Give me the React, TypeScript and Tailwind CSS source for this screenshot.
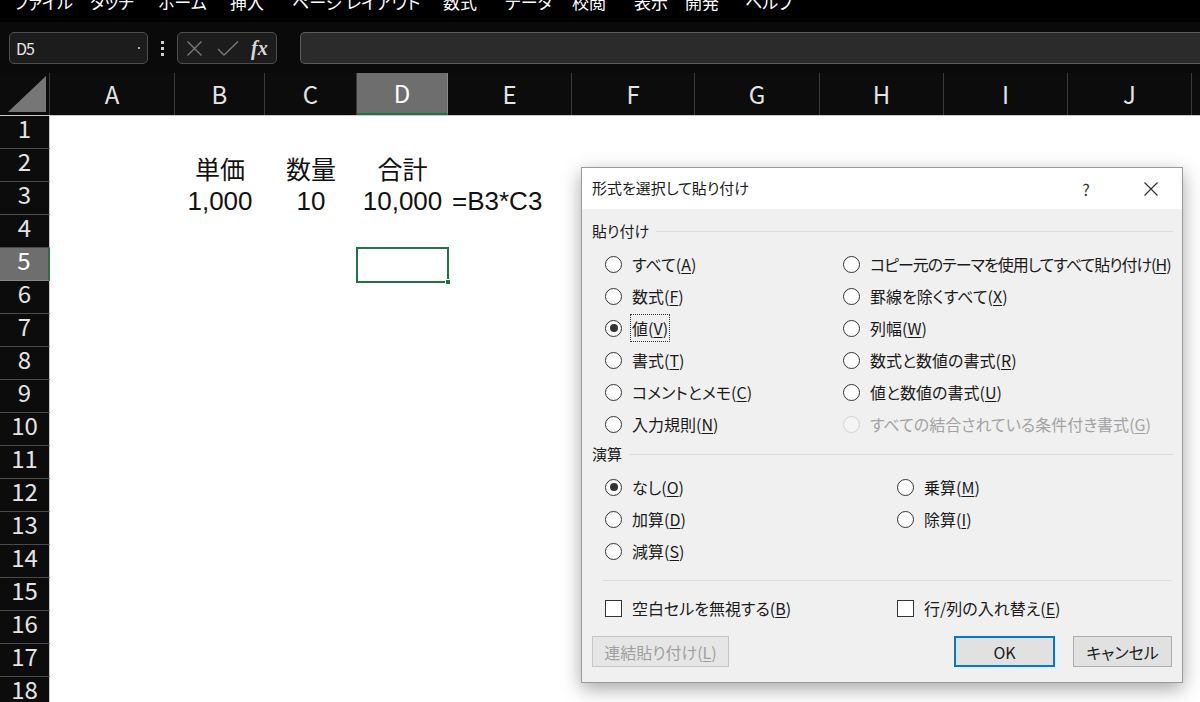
import React from "react";

const jp = "font-['Noto_Sans_CJK_JP','Noto_Sans',sans-serif] [font-feature-settings:'palt']";

const menus = [
  { t: "ファイル", w: "w-[76px]" },
  { t: "タッチ", w: "w-[68px]" },
  { t: "ホーム", w: "w-[72px]" },
  { t: "挿入", w: "w-[62px]" },
  { t: "ページ レイアウト", w: "w-[151px]" },
  { t: "数式", w: "w-[62px]" },
  { t: "データ", w: "w-[67px]" },
  { t: "校閲", w: "w-[62px]" },
  { t: "表示", w: "w-[51px]" },
  { t: "開発", w: "w-[60px]" },
  { t: "ヘルプ", w: "w-[60px]" },
];

const cols = [
  { k: "A", w: "w-[125px]" },
  { k: "B", w: "w-[90px]" },
  { k: "C", w: "w-[92px]" },
  { k: "D", w: "w-[91px]" },
  { k: "E", w: "w-[124px]" },
  { k: "F", w: "w-[123px]" },
  { k: "G", w: "w-[125px]" },
  { k: "H", w: "w-[124px]" },
  { k: "I", w: "w-[124px]" },
  { k: "J", w: "w-[124px]" },
  { k: "", w: "w-[60px]" },
];

// cell contents by row number
const cells: Record<number, Record<string, { t: string; jp?: boolean; left?: boolean }>> = {
  2: { B: { t: "単価", jp: true }, C: { t: "数量", jp: true }, D: { t: "合計", jp: true } },
  3: { B: { t: "1,000" }, C: { t: "10" }, D: { t: "10,000" }, E: { t: "=B3*C3", left: true } },
};

function Radio({ checked, disabled }: { checked?: boolean; disabled?: boolean }) {
  return (
    <span
      className={`w-[17px] h-[17px] shrink-0 rounded-full border flex items-center justify-center ${
        disabled ? "border-[#d2d2d2] bg-[#f4f4f4]" : "border-[#333] bg-white"
      }`}
    >
      {checked && <span className="w-[8px] h-[8px] rounded-full bg-[#333]" />}
    </span>
  );
}

function Label({ text, k, disabled }: { text: string; k: string; disabled?: boolean }) {
  return (
    <span className={`whitespace-nowrap ${disabled ? "text-[#a3a3a3]" : "text-[#1a1a1a]"}`}>
      {text}(<span className="underline underline-offset-2">{k}</span>)
    </span>
  );
}

function Option({ text, k, checked, disabled, focus, tight }: { text: string; k: string; checked?: boolean; disabled?: boolean; focus?: boolean; tight?: boolean }) {
  return (
    <div className={`h-[32px] flex items-center gap-[10px] ${tight ? "tracking-[-1px]" : ""}`}>
      <Radio checked={checked} disabled={disabled} />
      <span className={focus ? "outline outline-1 outline-dotted outline-[#333] outline-offset-[1px]" : ""}>
        <Label text={text} k={k} disabled={disabled} />
      </span>
    </div>
  );
}

function Section({ title }: { title: string }) {
  return (
    <div className="h-[20px] flex items-center gap-[7px] text-[15px] text-[#1a1a1a]">
      <span>{title}</span>
      <div className="flex-1 h-px bg-[#dcdcdc] mr-[-1px]" />
    </div>
  );
}

function PasteDialog() {
  return (
    <div className={`absolute left-[581px] top-[167px] w-[602px] border border-[#9a9a9a] bg-[#f0f0f0] shadow-[0_6px_18px_rgba(0,0,0,0.35)] ${jp}`}>
      <div className="h-[41px] bg-white flex items-center pl-[10px] text-[15px] text-[#1a1a1a]">
        <span className="flex-1">形式を選択して貼り付け</span>
        <span className="w-[20px] text-center text-[16px] text-[#333] mr-[47px]">?</span>
        <svg width="16" height="16" viewBox="0 0 16 16" className="mr-[23px]">
          <path d="M1.5 1.5 L14.5 14.5 M14.5 1.5 L1.5 14.5" stroke="#333" strokeWidth="1.2" />
        </svg>
      </div>
      <div className="px-[10px] pb-[15px] text-[16px]">
        <div className="mt-[12px]">
          <Section title="貼り付け" />
        </div>
        <div className="mt-[7px] pl-[13px] flex">
          <div className="w-[238px]">
            <Option text="すべて" k="A" />
            <Option text="数式" k="F" />
            <Option text="値" k="V" checked focus />
            <Option text="書式" k="T" />
            <Option text="コメントとメモ" k="C" />
            <Option text="入力規則" k="N" />
          </div>
          <div className="flex-1">
            <Option text="コピー元のテーマを使用してすべて貼り付け" k="H" tight />
            <Option text="罫線を除くすべて" k="X" />
            <Option text="列幅" k="W" />
            <Option text="数式と数値の書式" k="R" />
            <Option text="値と数値の書式" k="U" />
            <Option text="すべての結合されている条件付き書式" k="G" disabled />
          </div>
        </div>
        <div className="mt-[4px]">
          <Section title="演算" />
        </div>
        <div className="mt-[7px] pl-[13px] flex">
          <div className="w-[292px]">
            <Option text="なし" k="O" checked />
            <Option text="加算" k="D" />
            <Option text="減算" k="S" />
          </div>
          <div className="flex-1">
            <Option text="乗算" k="M" />
            <Option text="除算" k="I" />
          </div>
        </div>
        <div className="mt-[13px] ml-[11px] h-px bg-[#dcdcdc]" />
        <div className="mt-[17px] pl-[13px] flex h-[20px] items-center">
          <div className="w-[292px] flex items-center gap-[10px]">
            <span className="w-[17px] h-[17px] border border-[#333] bg-white" />
            <Label text="空白セルを無視する" k="B" />
          </div>
          <div className="flex items-center gap-[10px]">
            <span className="w-[17px] h-[17px] border border-[#333] bg-white" />
            <Label text="行/列の入れ替え" k="E" />
          </div>
        </div>
        <div className="mt-[18px] flex items-center h-[31px]">
          <div className="w-[137px] h-full border border-[#c6c6c6] bg-[#e6e6e6] flex items-center justify-center text-[#a0a0a0]">
            連結貼り付け(<span className="underline underline-offset-2">L</span>)
          </div>
          <div className="flex-1" />
          <div className="w-[101px] h-full border-2 border-[#0078d7] bg-[#e1e1e1] flex items-center justify-center text-[#1a1a1a] font-normal">
            OK
          </div>
          <div className="w-[99px] ml-[18px] h-full border border-[#adadad] bg-[#e1e1e1] flex items-center justify-center text-[#1a1a1a]">
            キャンセル
          </div>
        </div>
      </div>
    </div>
  );
}

export default function App() {
  const rows = Array.from({ length: 18 }, (_, i) => i + 1);

  return (
    <div className="relative w-[1200px] h-[702px] overflow-hidden bg-[#0a0a0a]">
      {/* --- MENU (tabs, cut off at the top) --- */}
      <div className={`h-[22px] overflow-hidden bg-black ${jp}`}>
        <div className="flex pl-[14px] -mt-[10px] text-[17px] leading-[24px] text-white">
          {menus.map((m) => (
            <span key={m.t} className={`${m.w} shrink-0 whitespace-nowrap`}>
              {m.t}
            </span>
          ))}
        </div>
      </div>

      {/* --- FORMULA BAR --- */}
      <div className="h-[51px] flex items-start pt-[10px] pl-[9px]">
        <div className="w-[139px] h-[32px] rounded-[5px] border border-[#4f4f4f] bg-[#1c1c1c] flex items-center px-[6px] text-[16px] text-[#e6e6e6] font-['Noto_Sans_CJK_JP',sans-serif]">
          <span className="flex-1 tracking-[-1px]">D5</span>
          <span className="w-[2px] h-[2px] bg-[#aaa] mr-[1px]" />
        </div>
        <div className="w-[29px] h-[32px] flex flex-col items-center justify-center gap-[3px]">
          <span className="w-[3px] h-[3px] bg-[#cfcfcf]" />
          <span className="w-[3px] h-[3px] bg-[#cfcfcf]" />
          <span className="w-[3px] h-[3px] bg-[#cfcfcf]" />
        </div>
        <div className="w-[100px] h-[32px] rounded-[5px] border border-[#4f4f4f] bg-[#1c1c1c] flex items-center pl-[8px] gap-[14px]">
          <svg width="17" height="17" viewBox="0 0 17 17">
            <path d="M1.5 1.5 L15.5 15.5 M15.5 1.5 L1.5 15.5" stroke="#7a7a7a" strokeWidth="1.4" />
          </svg>
          <svg width="22" height="17" viewBox="0 0 22 17">
            <path d="M1 9 L7 15 L21 1.5" fill="none" stroke="#7a7a7a" strokeWidth="1.4" />
          </svg>
          <span className="text-[20px] leading-none italic font-bold text-[#d8d8d8] font-['Liberation_Serif',serif] -ml-[2px]">fx</span>
        </div>
        <div className="ml-[23px] flex-1 h-[32px] rounded-l-[5px] border border-r-0 border-[#5c5c5c] bg-[#2b2b2b]" />
      </div>

      {/* --- COLUMN HEADERS --- */}
      <div className="flex h-[43px] bg-[#0c0c0c] border-b border-[#c8c8c8] font-['Noto_Sans_CJK_JP',sans-serif]">
        <div className="w-[50px] shrink-0 flex items-end justify-end pr-[3px] pb-[3px] border-r border-[#3a3a3a]">
          <svg width="38" height="36" viewBox="0 0 38 36">
            <path d="M38 0 L38 36 L0 36 Z" fill="#767676" />
          </svg>
        </div>
        {cols.map((c) => (
          <div
            key={c.w + c.k}
            className={`${c.w} shrink-0 flex items-center justify-center text-[24px] border-r ${
              c.k === "D"
                ? "bg-[#6e6e6e] text-white border-[#8a8a8a] border-b-2 border-b-[#217346]"
                : "text-[#e4e4e4] border-[#3a3a3a]"
            }`}
          >
            {c.k}
          </div>
        ))}
      </div>

      {/* --- GRID --- */}
      <div>
        {rows.map((r) => (
          <div key={r} className="flex h-[33px]">
            <div
              className={`w-[50px] shrink-0 flex items-center justify-center pb-[8px] text-[24px] leading-none border-b font-['Noto_Sans_CJK_JP',sans-serif] ${
                r === 5
                  ? "bg-[#6e6e6e] text-white border-[#8a8a8a] border-r-2 border-r-[#217346]"
                  : "bg-[#0c0c0c] text-[#e4e4e4] border-[#4a4a4a] border-r border-r-[#c8c8c8]"
              }`}
            >
              {r}
            </div>
            {cols.map((c) => {
              const v = cells[r]?.[c.k];
              const sel = r === 5 && c.k === "D";
              return (
                <div
                  key={c.w + c.k}
                  className={`${c.w} shrink-0 relative bg-white flex items-end pb-[1px] ${v?.left ? "justify-start pl-[4px]" : "justify-center"}`}
                >
                  {v && (
                    <span
                      className={`whitespace-nowrap leading-none text-[#111] ${
                        v.jp ? "text-[25px] font-['Noto_Sans_CJK_JP',sans-serif]" : "text-[26px] font-['Liberation_Sans',Arial,sans-serif]"
                      }`}
                    >
                      {v.t}
                    </span>
                  )}
                  {sel && (
                    <div className="absolute z-10 -left-[1px] -top-[1px] -right-[1px] -bottom-[2px] border-2 border-[#217346]">
                      <span className="absolute -right-[4px] -bottom-[4px] w-[6px] h-[6px] bg-[#217346] border border-white" />
                    </div>
                  )}
                </div>
              );
            })}
          </div>
        ))}
      </div>

      <PasteDialog />
    </div>
  );
}
